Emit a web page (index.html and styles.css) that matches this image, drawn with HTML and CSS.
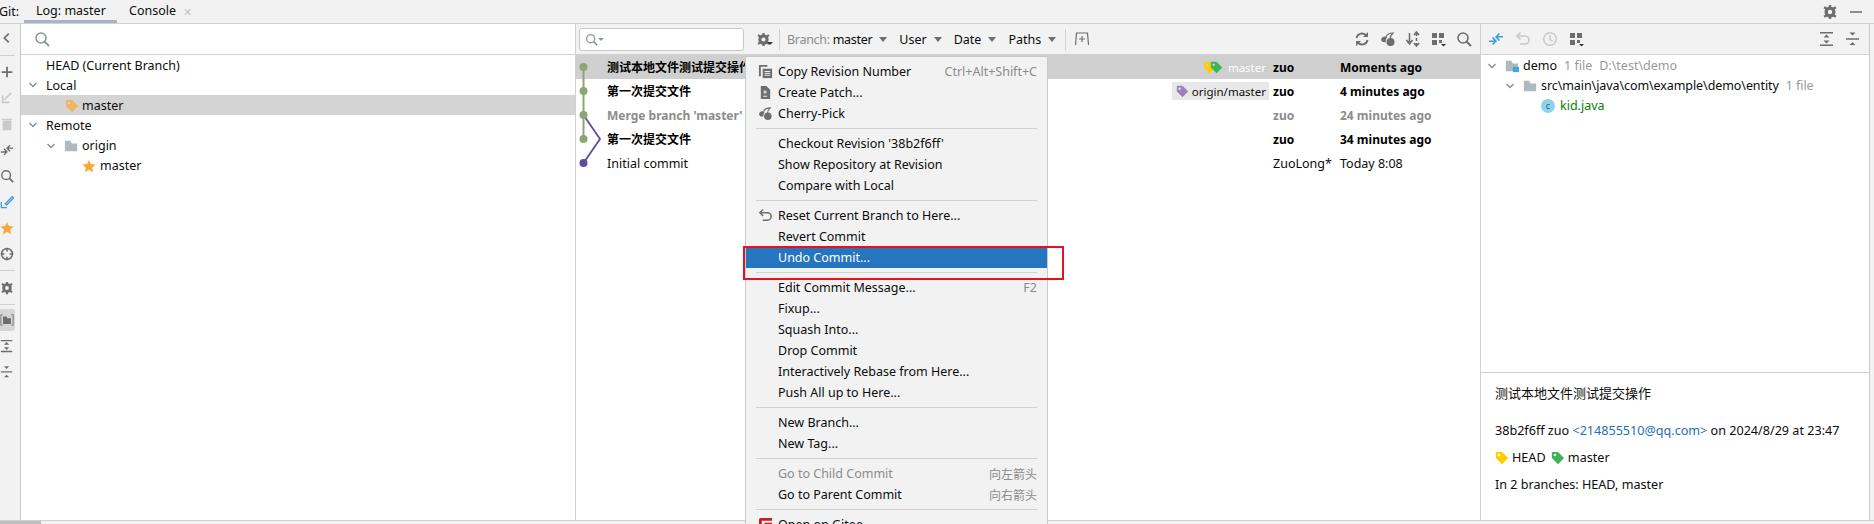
FILE: index.html
```html
<!DOCTYPE html>
<html><head>
    <meta charset="utf-8">
    <title>Git Log</title>
    <link rel="stylesheet" href="styles.css">
</head>
<body>
    <svg class="defs" width="0" height="0">
        <defs>
            <symbol id="tag" viewBox="0 0 16 16"><path fill-rule="evenodd" d="M1 1h7l7 7-7 7-7-7zM4.500 3a1.500 1.500 0 1 0 0 3 1.500 1.500 0 0 0 0-3z" fill="currentColor"/></symbol>
            <symbol id="star" viewBox="0 0 16 16"><path d="M8 1l2.200 4.800 5.300.6-3.900 3.500 1.100 5.100L8 12.400 3.300 15l1.100-5.100L.5 6.400l5.300-.6z" fill="#f5a93a"/></symbol>
            <symbol id="folder" viewBox="0 0 16 14"><path d="M1 1h6l2 3h6v9H1z" fill="#aeb9c0"/></symbol>
            <symbol id="chev" viewBox="0 0 10 10"><path d="M1.500 3l3.500 3.500L8.500 3" fill="none" stroke="#7f8b91" stroke-width="1.300"/></symbol>
            <symbol id="gear" viewBox="0 0 16 16"><path d="M8 2.500a5.500 5.500 0 1 0 0 11 5.500 5.500 0 0 0 0-11zm0 3.300a2.200 2.200 0 1 1 0 4.400 2.200 2.200 0 0 1 0-4.400z" fill="#6e6e6e" fill-rule="evenodd"/><path d="M6.800 1h2.400v3H6.800zM6.800 12h2.400v3H6.800zM1.500 4.300l1.200-2 2.600 1.500-1.200 2zM10.700 12.200l1.200-2 2.600 1.500-1.200 2zM13.300 2.300l1.200 2-2.600 1.500-1.200-2zM4.100 10.200l1.200 2-2.600 1.500-1.200-2z" fill="#6e6e6e"/></symbol>
            <symbol id="search" viewBox="0 0 16 16"><circle cx="7" cy="7" r="5" fill="none" stroke="currentColor" stroke-width="1.600"/><path d="M10.500 10.500L15 15" stroke="currentColor" stroke-width="2"/></symbol>
            <symbol id="cherry" viewBox="0 0 16 16"><circle cx="10.500" cy="11" r="4" fill="#6e6e6e"/><path d="M1 9a4 4 0 0 1 4-3.500c1.500 0 2 1 2 1a5 5 0 0 0-1 4.500 4 4 0 0 1-5-2z" fill="#6e6e6e"/><path d="M6 6c1-3 4-4 7-4-2 2-3 4-3 6" fill="none" stroke="#6e6e6e" stroke-width="1.200"/></symbol>
            <symbol id="grid" viewBox="0 0 16 16"><path d="M1 2h5v5H1zM8 2h5v5H8zM1 9h5v5H1zM8 9h3v3H8z" fill="#6e6e6e"/><path d="M10 13h5l-2.500 2.500z" fill="#333"/></symbol>
            <symbol id="expand" viewBox="0 0 16 16"><path d="M1 1h13v1.500H1zM1 13.500h13V15H1zM7.500 3.500l3 3h-6zM4.500 9.500h6l-3 3z" fill="#6e6e6e"/></symbol>
            <symbol id="collapse" viewBox="0 0 16 16"><path d="M1 7.200h13v1.500H1zM4.500 1.500h6l-3 3zM7.500 11l3 3h-6z" fill="#6e6e6e"/></symbol>
            <symbol id="undo" viewBox="0 0 16 16"><path d="M2 5h8a4 4 0 0 1 0 8H5" fill="none" stroke="currentColor" stroke-width="1.600"/><path d="M5.500 1.500L2 5l3.500 3.500" fill="none" stroke="currentColor" stroke-width="1.600"/></symbol>
            <symbol id="diff" viewBox="0 0 16 16"><path d="M1 9.500h5l-2-2.500 1.200-1L9 10l-3.800 4L4 13l2-2H1zM15 6.500h-5l2 2.500-1.200 1L7 6l3.800-4L12 3l-2 2h5z" fill="currentColor"/></symbol>
        </defs>
    </svg>

    <div class="tabbar">
        <span class="tab-label">Git:</span>
        <span class="tab tab-active">Log: master</span>
        <span class="tab">Console</span>
        <span class="tab-close">✕</span>
        <span class="tabbar-right">
            <svg class="ico"><use href="#gear"/></svg>
            <span class="minimize"></span>
        </span>
    </div>

    <div class="main">
        <div class="sidebar">
            <svg class="side-ico back" viewBox="0 0 16 16"><path d="M10 3L5 8l5 5" fill="none" stroke="#6e6e6e" stroke-width="2"/></svg>
            <div class="side-sep"></div>
            <svg class="side-ico" viewBox="0 0 16 16"><path d="M7 2h2v5h5v2H9v5H7V9H2V7h5z" fill="#6e6e6e"/></svg>
            <svg class="side-ico" viewBox="0 0 16 16"><path d="M13 2L5 10M3 5v8h8" fill="none" stroke="#c9c9c9" stroke-width="2"/></svg>
            <svg class="side-ico" viewBox="0 0 16 16"><path d="M3 4h10v11H3zM2 2h12v1.500H2z" fill="#c9c9c9"/></svg>
            <svg class="side-ico" viewBox="0 0 16 16" color="#c9c9c9"><use href="#diff"/></svg>
            <svg class="side-ico"><use href="#search"/></svg>
            <svg class="side-ico" viewBox="0 0 16 16"><path d="M6 10l8-8 1.500 1.500-8 8zM1.500 8v6.500H8" fill="none" stroke="#3d9fe0" stroke-width="1.500"/></svg>
            <svg class="side-ico"><use href="#star"/></svg>
            <svg class="side-ico" viewBox="0 0 16 16"><circle cx="8" cy="8" r="6.200" fill="none" stroke="#6e6e6e" stroke-width="1.800"/><path d="M8 1v4M8 11v4M1 8h4M11 8h4" stroke="#6e6e6e" stroke-width="1.800"/></svg>
            <div class="side-sep"></div>
            <svg class="side-ico side-gear"><use href="#gear"/></svg>
            <div class="side-sep"></div>
            <div class="side-toggled"><svg class="side-ico" viewBox="0 0 16 16"><path d="M3 2H1v12h2M13 2h2v12h-2" fill="none" stroke="#6e6e6e"/><path d="M3.500 4h4l1 2h4v6.500h-9z" fill="#6e6e6e"/></svg></div>
            <svg class="side-ico"><use href="#expand"/></svg>
            <svg class="side-ico"><use href="#collapse"/></svg>
        </div>

        <div class="branches">
            <div class="branch-search"><svg class="ico search-grey"><use href="#search"/></svg></div>
            <div class="tree">
                <div class="tree-row lvl0">HEAD (Current Branch)</div>
                <div class="tree-row lvl0"><svg class="chev"><use href="#chev"/></svg>Local</div>
                <div class="tree-row lvl1 tree-selected"><svg class="ico tag-orange"><use href="#tag"/></svg>master</div>
                <div class="tree-row lvl0"><svg class="chev"><use href="#chev"/></svg>Remote</div>
                <div class="tree-row lvl1b"><svg class="chev"><use href="#chev"/></svg><svg class="ico folder"><use href="#folder"/></svg>origin</div>
                <div class="tree-row lvl2"><svg class="ico"><use href="#star"/></svg>master</div>
            </div>
        </div>

        <div class="log">
            <div class="log-toolbar">
                <div class="log-search">
                    <svg class="ico search-grey small"><use href="#search"/></svg><span class="caret-sm"></span>
                </div>
                <svg class="ico gear-btn"><use href="#gear"/></svg><span class="caret-xs"></span>
                <span class="tool-sep"></span>
                <span class="filter filter-branch"><span class="muted">Branch:</span> master<i class="caret"></i></span>
                <span class="filter">User<i class="caret"></i></span>
                <span class="filter">Date<i class="caret"></i></span>
                <span class="filter">Paths<i class="caret"></i></span>
                <span class="tool-sep tool-sep-b"></span>
                <svg class="ico" viewBox="0 0 16 16"><path d="M1.500 14l1-12h11l1 12M8 5v6M5 8h6" fill="none" stroke="#6e6e6e" stroke-width="1.200"/></svg>
                <span class="tool-right">
                    <svg class="ico" viewBox="0 0 16 16"><path d="M2.500 7a5.500 5.500 0 0 1 10-2M13.500 9a5.500 5.500 0 0 1-10 2" fill="none" stroke="#6e6e6e" stroke-width="1.800"/><path d="M14 1v5H9zM2 15v-5h5z" fill="#6e6e6e"/></svg>
                    <svg class="ico"><use href="#cherry"/></svg>
                    <svg class="ico" viewBox="0 0 16 16"><path d="M4.500 2v9M1.500 9l3 4 3-4M11.500 2v3M11.500 7v3M11.500 12v2M9 4l2.500-3L14 4M9 12l2.500 3 2.500-3" fill="none" stroke="#6e6e6e" stroke-width="1.600"/></svg>
                    <svg class="ico"><use href="#grid"/></svg>
                    <svg class="ico" color="#6e6e6e"><use href="#search"/></svg>
                </span>
            </div>
            <div class="commits">
                <svg class="graph" width="30" height="120" viewBox="0 0 30 120">
                    <path d="M7.500 12V84" stroke="#8aa672" stroke-width="2" fill="none"/>
                    <path d="M7.500 60L24 84 7.500 108" stroke="#5f4b9b" stroke-width="1.800" fill="none"/>
                    <circle cx="7.500" cy="12" r="4" fill="#8aa672"/>
                    <circle cx="7.500" cy="36" r="4" fill="#8aa672"/>
                    <circle cx="7.500" cy="60" r="4" fill="#8aa672"/>
                    <circle cx="7.500" cy="84" r="4" fill="#8aa672"/>
                    <circle cx="7.500" cy="108" r="4" fill="#5f4b9b"/>
                </svg>
                <div class="commit commit-selected bold">
                    <span class="c-msg">测试本地文件测试提交操作</span>
                    <span class="c-ref ref-white"><svg class="ico tag-y"><use href="#tag"/></svg><svg class="ico tag-g"><use href="#tag"/></svg>master</span>
                    <span class="c-author">zuo</span><span class="c-date">Moments ago</span>
                </div>
                <div class="commit bold">
                    <span class="c-msg">第一次提交文件</span>
                    <span class="c-ref ref-box"><svg class="ico tag-p"><use href="#tag"/></svg>origin/master</span>
                    <span class="c-author">zuo</span><span class="c-date">4 minutes ago</span>
                </div>
                <div class="commit bold commit-grey">
                    <span class="c-msg">Merge branch 'master'</span>
                    <span class="c-ref"></span>
                    <span class="c-author">zuo</span><span class="c-date">24 minutes ago</span>
                </div>
                <div class="commit bold">
                    <span class="c-msg">第一次提交文件</span>
                    <span class="c-ref"></span>
                    <span class="c-author">zuo</span><span class="c-date">34 minutes ago</span>
                </div>
                <div class="commit">
                    <span class="c-msg">Initial commit</span>
                    <span class="c-ref"></span>
                    <span class="c-author">ZuoLong*</span><span class="c-date">Today 8:08</span>
                </div>
            </div>
        </div>

        <div class="changes">
            <div class="changes-toolbar">
                <svg class="ico" color="#3d9fe0"><use href="#diff"/></svg>
                <svg class="ico" color="#c9c9c9"><use href="#undo"/></svg>
                <svg class="ico" viewBox="0 0 16 16"><circle cx="8" cy="8" r="6.300" fill="none" stroke="#c9c9c9" stroke-width="1.500"/><path d="M8 4v4.500l3 2" fill="none" stroke="#c9c9c9" stroke-width="1.500"/></svg>
                <svg class="ico"><use href="#grid"/></svg>
                <span class="tool-right">
                    <svg class="ico"><use href="#expand"/></svg>
                    <svg class="ico"><use href="#collapse"/></svg>
                </span>
            </div>
            <div class="file-tree">
                <div class="tree-row f0"><svg class="chev"><use href="#chev"/></svg><svg class="ico module" viewBox="0 0 16 14"><path d="M1 1h6l2 3h6v9H1z" fill="#aeb9c0"/><path d="M9 8h7v6H9z" fill="#3fa9dc"/></svg>demo<span class="hint">1 file</span><span class="hint">D:\test\demo</span></div>
                <div class="tree-row f1"><svg class="chev"><use href="#chev"/></svg><svg class="ico folder"><use href="#folder"/></svg>src\main\java\com\example\demo\entity<span class="hint">1 file</span></div>
                <div class="tree-row f2 java"><span class="class-ico">c</span>kid.java</div>
            </div>
            <div class="details">
                <div class="d-title">测试本地文件测试提交操作</div>
                <div class="d-meta">38b2f6ff zuo <span class="d-mail">&lt;214855510@qq.com&gt;</span> on 2024/8/29 at 23:47</div>
                <div class="d-refs"><svg class="ico tag-y"><use href="#tag"/></svg>HEAD <svg class="ico tag-g"><use href="#tag"/></svg>master</div>
                <div class="d-branches">In 2 branches: HEAD, master</div>
            </div>
        </div>
    </div>
    <div class="bottom"><span class="scroll-thumb"></span></div>

    <div class="menu">
        <div class="m-item"><svg class="m-ico" viewBox="0 0 16 16"><path d="M1 1h9v2H3v10H1z" fill="#6e6e6e"/><path d="M5 5h10v10H5z" fill="#6e6e6e"/><path d="M7 8h6M7 10h6M7 12h6" stroke="#f2f2f2"/></svg>Copy Revision Number<span class="m-key">Ctrl+Alt+Shift+C</span></div>
        <div class="m-item"><svg class="m-ico" viewBox="0 0 16 16"><path d="M3 1h6l4 4v10H3z" fill="#6e6e6e"/><path d="M5.500 7.500h4M7.500 5.500v4M5.500 12h4" stroke="#f2f2f2"/></svg>Create Patch...</div>
        <div class="m-item"><svg class="m-ico"><use href="#cherry"/></svg>Cherry-Pick</div>
        <div class="m-sep"></div>
        <div class="m-item">Checkout Revision '38b2f6ff'</div>
        <div class="m-item">Show Repository at Revision</div>
        <div class="m-item">Compare with Local</div>
        <div class="m-sep"></div>
        <div class="m-item"><svg class="m-ico" color="#6e6e6e"><use href="#undo"/></svg>Reset Current Branch to Here...</div>
        <div class="m-item">Revert Commit</div>
        <div class="m-item m-active">Undo Commit...</div>
        <div class="m-sep"></div>
        <div class="m-item">Edit Commit Message...<span class="m-key">F2</span></div>
        <div class="m-item">Fixup...</div>
        <div class="m-item">Squash Into...</div>
        <div class="m-item">Drop Commit</div>
        <div class="m-item">Interactively Rebase from Here...</div>
        <div class="m-item">Push All up to Here...</div>
        <div class="m-sep"></div>
        <div class="m-item">New Branch...</div>
        <div class="m-item">New Tag...</div>
        <div class="m-sep"></div>
        <div class="m-item m-disabled">Go to Child Commit<span class="m-key m-key-cjk">向左箭头</span></div>
        <div class="m-item">Go to Parent Commit<span class="m-key m-key-cjk">向右箭头</span></div>
        <div class="m-sep"></div>
        <div class="m-item"><svg class="m-ico" viewBox="0 0 16 16"><path d="M1 3a2 2 0 0 1 2-2h12v3H4v8h8v-3H7V6h8v9H3a2 2 0 0 1-2-2z" fill="#c71d23"/></svg>Open on Gitee</div>
    </div>
    <div class="highlight-box"></div>
</body></html>
```

FILE: styles.css
```css
* {box-sizing: border-box;}
html, body {margin: 0; height: 524px; overflow: hidden;}
body {background-color: #f2f2f2; color: #0c0c0c; font-family: "Noto Sans", "Noto Sans CJK SC", sans-serif; font-size: 12.5px; position: relative;}
svg {display: block; flex: none;}
.defs {position: absolute;}
.ico {width: 16px; height: 16px;}

/* top tabs */
.tabbar {height: 24px; display: flex; align-items: center; border-bottom: 1px solid #d1d1d1; white-space: nowrap;}
.tab-label {width: 24px; overflow: hidden; text-indent: -1px;}
.tab {height: 23px; line-height: 22px; padding: 0 12px;}
.tab-active {width: 93px; border-bottom: 3px solid #a9b4c6;}
.tab-close {color: #c4c4c4; font-size: 11px; margin-left: -5px;}
.tabbar-right {margin-left: auto; display: flex; align-items: center; gap: 12px; padding-right: 12px;}
.minimize {width: 12px; height: 2px; background-color: #8c8c8c;}

.main {display: flex; height: 497px; border-bottom: 1px solid #d1d1d1;}

/* left vertical toolbar */
.sidebar {width: 21px; flex: none; border-right: 1px solid #c9c9c9; display: flex; flex-direction: column; align-items: center; padding-right: 7px;}
.side-ico {width: 14px; height: 16px; margin: 5px 0; color: #6e6e6e; flex: none;}
.back {margin: 6px 0;}
.side-gear {margin: 6px 0 5px;}
.side-sep {width: 16px; height: 1px; background-color: #d1d1d1; margin: 3px 0; flex: none;}
.side-toggled {background-color: #d6d6d6; border-radius: 3px; height: 22px; width: 17px; display: flex; align-items: center; justify-content: center; margin: 1px 0 2px; flex: none;}
.side-toggled .side-ico {margin: 0;}

/* branches panel */
.branches {width: 555px; flex: none; background-color: #fff; border-right: 1px solid #d1d1d1; display: flex; flex-direction: column;}
.branch-search {height: 31px; flex: none; border-bottom: 1px solid #d1d1d1; display: flex; align-items: center; padding-left: 13px;}
.search-grey {color: #8b979f;}
.tree-row {height: 20px; line-height: 20px; padding-top: 2px; display: flex; align-items: center; white-space: pre;}
.lvl0 {padding-left: 25px; position: relative;}
.lvl0 .chev {position: absolute; left: 7px; top: 5px;}
.chev {width: 10px; height: 10px;}
.lvl1 {padding-left: 44px;}
.lvl1 .ico {margin-right: 3px; width: 14px; height: 14px;}
.tree-selected {background-color: #d4d4d4;}
.tag-orange {color: #eeb563;}
.lvl1b {padding-left: 25px;}
.lvl1b .chev {margin-right: 8px;}
.folder {margin-right: 4px; width: 14px; height: 14px;}
.lvl2 {padding-left: 61px;}
.lvl2 .ico {margin-right: 4px; width: 14px; height: 14px;}

/* commit log */
.log {width: 905px; flex: none; background-color: #fff; display: flex; flex-direction: column; border-right: 1px solid #d1d1d1;}
.log-toolbar {height: 31px; flex: none; background-color: #f2f2f2; border-bottom: 1px solid #d1d1d1; display: flex; align-items: center; padding-left: 3px;}
.log-search {width: 165px; height: 23px; background-color: #fff; border: 1px solid #c9c9c9; border-radius: 3px; display: flex; align-items: center; padding-left: 5px; margin-right: 12px;}
.small {width: 13px; height: 13px;}
.caret-sm {border: 3px solid transparent; border-top-color: #8b979f; margin: 3px 0 0 0;}
.caret-xs {border: 3px solid transparent; border-top-color: #333; margin: 12px 0 0 -4px;}
.gear-btn {width: 15px; height: 15px;}
.tool-sep {width: 1px; height: 21px; background-color: #d1d1d1; margin: 0 7px 0 6px;}
.tool-sep-b {margin: 0 8px 0 -3px;}
.filter {margin-right: 12px; display: flex; align-items: center; white-space: pre;}
.filter-branch {letter-spacing: -.3px;}
.muted {color: #8c8c8c;}
.caret {border: 4px solid transparent; border-top: 5px solid #6e6e6e; border-bottom: 0; margin-left: 7px; width: 0; height: 0;}
.tool-right {margin-left: auto; display: flex; align-items: center; gap: 9.5px; padding-right: 8px;}
.commits {position: relative;}
.graph {position: absolute; left: 0; top: 0;}
.commit {height: 24px; display: flex; align-items: center; padding-left: 31px;}
.commit-selected {background-color: #cfcfcf;}
.bold {font-weight: 700; font-size: 12px; color: #000;}
.commit-grey {color: #8c8c8c;}
.c-msg {flex: 1;}
.c-ref {font-weight: 400; font-size: 11.5px; display: flex; align-items: center; margin-right: 4px; height: 18px; padding: 0 3px 0 4px;}
.ref-white {color: #fff;}
.ref-box {background-color: #e8e8e8; color: #0c0c0c;}
.ref-box .ico {width: 13px; height: 13px; margin-right: 3px;}
.ref-white .ico {width: 13px; height: 13px;}
.tag-y {color: #ffcc00;}
.tag-g {color: #3fb357; margin-left: -6px; margin-right: 5px;}
.tag-p {color: #9f7fc0;}
.c-author {width: 67px;}
.c-date {width: 140px;}

/* changes panel */
.changes {flex: 1; background-color: #fff; display: flex; flex-direction: column; border-right: 1px solid #c9c9c9; margin-right: 4px;}
.changes-toolbar {height: 31px; flex: none; background-color: #f2f2f2; border-bottom: 1px solid #d1d1d1; display: flex; align-items: center; gap: 11px; padding-left: 7px;}
.changes-toolbar .tool-right {gap: 10px;}
.file-tree {height: 318px; flex: none; border-bottom: 1px solid #d1d1d1;}
.f0 {padding-left: 6px;}
.f0 .chev {margin-right: 8px;}
.module {margin-right: 4px; width: 14px; height: 14px;}
.f1 {padding-left: 24px; letter-spacing: -.08px;}
.f1 .chev {margin-right: 8px;}
.hint {color: #9a9a9a; margin-left: 7px;}
.f2 {padding-left: 60px;}
.java {color: #0a7e07;}
.class-ico {width: 14px; height: 14px; border-radius: 50%; background-color: #8ed3ee; color: #2f5f6f; font-size: 9px; line-height: 13px; text-align: center; margin-right: 5px;}
.details {padding: 10px 14px; font-size: 12.6px; line-height: 20px;}
.d-title {font-size: 13px;}
.d-meta {margin-top: 18px;}
.d-mail {color: #2470b3;}
.d-refs {margin-top: 7px; display: flex; align-items: center; white-space: pre;}
.d-refs .ico {width: 14px; height: 14px; margin-right: 3px;}
.d-refs .tag-g {margin-left: 2px;}
.d-branches {margin-top: 7px;}
.bottom {height: 3px;}
.scroll-thumb {display: block; width: 41px; height: 3px; background-color: #bdbdbd;}

/* popup menu */
.menu {position: absolute; left: 745px; top: 56px; width: 303px; height: 468px; overflow: hidden; background-color: #f2f2f2; border: 1px solid #c9c9c9; border-bottom: 0; padding-top: 4px;}
.m-item {height: 21px; display: flex; align-items: center; padding-left: 32px; padding-right: 10px; position: relative; white-space: pre;}
.m-ico {position: absolute; left: 12px; top: 3px; width: 15px; height: 15px;}
.m-key {margin-left: auto; color: #8c8c8c;}
.m-key-cjk {font-size: 12px;}
.m-sep {height: 1px; background-color: #d1d1d1; margin: 4px 10px;}
.m-active {background-color: #2675bf; color: #fff;}
.m-disabled {color: #8c8c8c;}
.highlight-box {position: absolute; left: 743px; top: 246px; width: 321px; height: 34px; border: 2px solid #e81123;}
```
